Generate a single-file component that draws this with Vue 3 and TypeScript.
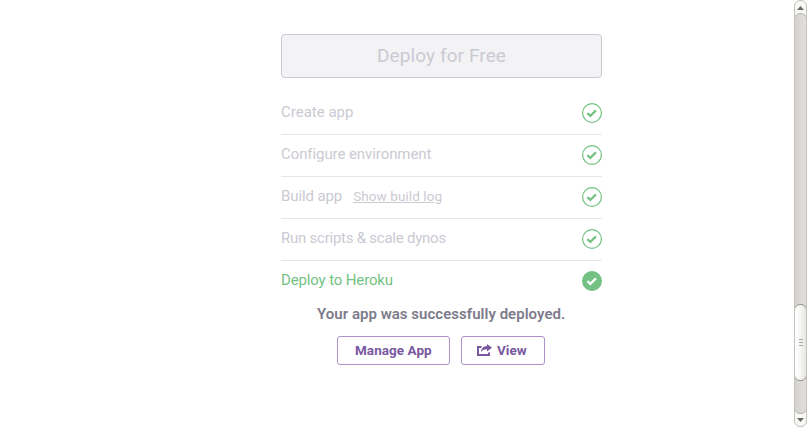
<script setup lang="ts">
interface Step {
  id: string
  label: string
  log?: boolean
  current?: boolean
}

const steps: Step[] = [
  { id: 'create', label: 'Create app' },
  { id: 'configure', label: 'Configure environment' },
  { id: 'build', label: 'Build app', log: true },
  { id: 'scripts', label: 'Run scripts & scale dynos' },
  { id: 'release', label: 'Deploy to Heroku', current: true },
]
</script>

<template>
  <div class="page">
    <main class="content">
      <button class="deploy" disabled>Deploy for Free</button>
      <ul class="steps">
        <li v-for="step in steps" :key="step.id" class="step" :class="[step.id, { current: step.current }]">
          <span class="label">{{ step.label }}</span>
          <a v-if="step.log" class="log">Show build log</a>
          <svg class="check" width="20" height="20" viewBox="0 0 20 20">
            <circle class="ring" cx="10" cy="10" r="9.4" />
            <path class="tick" d="M5.4 10.1 8.3 12.9 14 7.4" />
          </svg>
        </li>
      </ul>
      <p class="message">Your app was successfully deployed.</p>
      <div class="actions">
        <button class="btn manage"><span>Manage App</span></button>
        <button class="btn view">
          <svg width="16" height="13" viewBox="0 0 16 13">
            <path d="M4.5 3H1v8h11V8.5" fill="none" stroke="currentColor" stroke-width="2" />
            <path d="M10 0 15 3.7 10 7.4V5.4C7.7 5.2 5.4 5.9 4 8.4 4 4.6 6.4 2.1 10 2Z" fill="currentColor" />
          </svg>
          <span>View</span>
        </button>
      </div>
    </main>
    <aside class="scrollbar">
      <div class="arrow up"><svg width="7" height="4" viewBox="0 0 7 4"><path d="M3.5 0 7 4H0Z" /></svg></div>
      <div class="track">
        <div class="thumb"><i></i><i></i><i></i></div>
      </div>
      <div class="arrow down"><svg width="7" height="4" viewBox="0 0 7 4"><path d="M0 0H7L3.5 4Z" /></svg></div>
    </aside>
  </div>
</template>

<style>
body {
  margin: 0;
  background: #fff;
}
</style>

<style scoped>
.page {
  display: flex;
  width: 807px;
  height: 427px;
  overflow: hidden;
  box-sizing: border-box;
  font-family: Roboto, "Liberation Sans", sans-serif;
}
.content {
  flex: 1;
  box-sizing: border-box;
  padding: 34px 192px 0 281px;
}
button {
  font-family: inherit;
  box-sizing: border-box;
}
.deploy {
  display: block;
  width: 321px;
  height: 44px;
  padding: 0;
  border: 1px solid #cbcad3;
  border-radius: 4px;
  background: #f3f3f6;
  color: #cbcad3;
  font-size: 19px;
  line-height: 42px;
  letter-spacing: 0.1px;
}
.steps {
  list-style: none;
  margin: 15px 0 0;
  padding: 0;
}
.step {
  display: flex;
  align-items: center;
  box-sizing: border-box;
  height: 42px;
  padding-bottom: 2px;
  border-bottom: 1px solid #e6e6ea;
  color: #cbcad3;
  font-size: 15px;
  line-height: 18px;
}
.step:last-child {
  border-bottom: 0;
  height: 41px;
}
.label {
  white-space: nowrap;
  margin-top: -2px;
}
.configure .label {
  letter-spacing: -0.08px;
}
.build .label {
  letter-spacing: -0.1px;
}
.scripts .label {
  letter-spacing: -0.24px;
}
.release .label {
  letter-spacing: -0.14px;
}
.log {
  margin: -1px 0 0 11px;
  font-size: 13.5px;
  letter-spacing: 0.08px;
  text-decoration: underline;
}
.check {
  margin-left: auto;
}
.ring {
  fill: none;
  stroke: #74c283;
  stroke-width: 1.2;
}
.tick {
  fill: none;
  stroke: #74c283;
  stroke-width: 2.2;
}
.current {
  color: #74c283;
}
.current .ring {
  fill: #74c283;
}
.current .tick {
  stroke: #fff;
}
.message {
  margin: 2px 0 0 36px;
  font-size: 15px;
  line-height: 20px;
  font-weight: 600;
  letter-spacing: 0.03px;
  color: #7d7b8c;
  white-space: nowrap;
}
.actions {
  display: flex;
  gap: 11px;
  margin: 12px 0 0 56px;
}
.btn {
  display: flex;
  align-items: center;
  height: 29px;
  padding: 0;
  border: 1px solid #ab93c9;
  border-radius: 3px;
  background: #fff;
  color: #79589f;
  font-size: 13.5px;
  font-weight: 700;
  line-height: 27px;
  white-space: nowrap;
}
.manage {
  width: 113px;
  padding-left: 17px;
  letter-spacing: 0.05px;
}
.view {
  width: 84px;
  padding-left: 15px;
  gap: 4px;
}
.scrollbar {
  display: flex;
  flex-direction: column;
  width: 13px;
  height: 427px;
  box-sizing: border-box;
  border: 1px solid #c5c2be;
  border-radius: 6px;
  background: #f7f7f6;
  overflow: hidden;
}
.arrow {
  display: flex;
  align-items: center;
  justify-content: center;
  height: 12px;
}
.up {
  padding-top: 2px;
  height: 10px;
}
.arrow svg {
  fill: #6b6966;
}
.track {
  flex: 1;
  box-sizing: border-box;
  margin: 0 -1px;
  padding-top: 290px;
  border: 1px solid #b9b6b1;
  border-radius: 6px;
  background: linear-gradient(90deg, #d5d3cf, #e0dfdc);
}
.thumb {
  display: flex;
  flex-direction: column;
  align-items: center;
  justify-content: center;
  gap: 2px;
  height: 77px;
  margin: 0 -1px;
  box-sizing: border-box;
  border: 1px solid #98958f;
  border-radius: 6px;
  background: linear-gradient(90deg, #fff, #f7f7f6 45%, #e6e5e2);
}
.thumb i {
  width: 4px;
  height: 1px;
  background: #aaa7a2;
}
</style>
